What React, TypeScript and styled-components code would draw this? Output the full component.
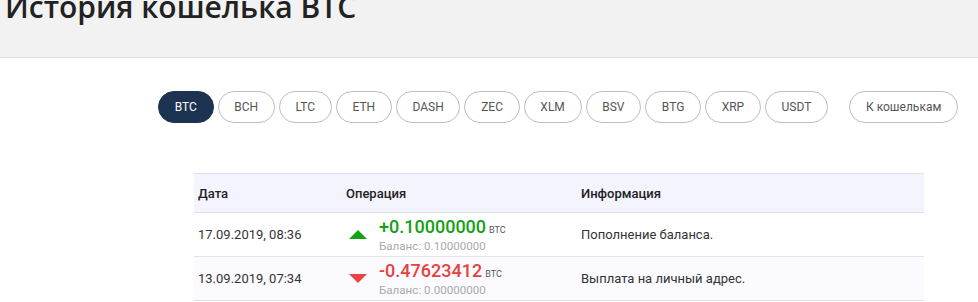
import styled, { createGlobalStyle } from 'styled-components';

const GlobalStyle = createGlobalStyle`
  body {
    margin: 0;
    background: #fff;
    font-family: Roboto, "Noto Sans", sans-serif;
    color: #333;
  }
`;

const coins = ['BTC', 'BCH', 'LTC', 'ETH', 'DASH', 'ZEC', 'XLM', 'BSV', 'BTG', 'XRP', 'USDT'];

const rows = [
  { date: '17.09.2019, 08:36', amount: '+0.10000000', balance: '0.10000000', info: 'Пополнение баланса.', up: true },
  { date: '13.09.2019, 07:34', amount: '-0.47623412', balance: '0.00000000', info: 'Выплата на личный адрес.', up: false },
];

const App = () => {
  return (
    <Page>
      <GlobalStyle />
      <Header>
        <Title>История кошелька BTC</Title>
      </Header>

      <Toolbar>
        <CoinList>
          {coins.map((c) => (
            <Pill key={c} active={c === 'BTC'}>{c}</Pill>
          ))}
        </CoinList>
        <Pill>К кошелькам</Pill>
      </Toolbar>

      <Table>
        <thead>
          <tr>
            <Th width={140}>Дата</Th>
            <Th width={227}>Операция</Th>
            <Th>Информация</Th>
          </tr>
        </thead>
        <tbody>
          {rows.map((r) => (
            <Tr key={r.date}>
              <Td>{r.date}</Td>
              <Td>
                <Operation>
                  <Arrow up={r.up} />
                  <div>
                    <Amount up={r.up}>
                      {r.amount}
                      <Unit>BTC</Unit>
                    </Amount>
                    <Balance>Баланс: {r.balance}</Balance>
                  </div>
                </Operation>
              </Td>
              <Td>{r.info}</Td>
            </Tr>
          ))}
        </tbody>
      </Table>
    </Page>
  );
};

export default App;

// region STYLES

const Page = styled.div`
  width: 978px;
  height: 302px;
  overflow: hidden;
`;

const Header = styled.div`
  height: 57px;
  background: #f2f2f2;
  border-bottom: 1px solid #dedede;
  padding-left: 5px;
  overflow: hidden;
`;

const Title = styled.h1`
  margin: -11px 0 0;
  font-family: "Open Sans", sans-serif;
  font-size: 30px;
  line-height: 36px;
  font-weight: 600;
  color: #222;
`;

const Toolbar = styled.div`
  display: flex;
  align-items: center;
  padding: 33px 20px 0 158px;
`;

const CoinList = styled.div`
  display: flex;
  gap: 4px;
  flex: 1;
`;

const Pill = styled.div<{ active?: boolean }>`
  height: 32px;
  box-sizing: border-box;
  padding: 0 15.7px;
  display: flex;
  align-items: center;
  border-radius: 16px;
  font-size: 12px;
  color: ${(p) => (p.active ? '#fff' : '#555')};
  background: ${(p) => (p.active ? '#1c3452' : '#fff')};
  border: 1px solid ${(p) => (p.active ? '#1c3452' : '#bdbdbd')};
`;

const Table = styled.table`
  margin: 50px 0 0 194px;
  width: 730px;
  border-collapse: collapse;
  font-size: 13px;
`;

const Th = styled.th<{ width?: number }>`
  width: ${(p) => (p.width ? `${p.width}px` : 'auto')};
  text-align: left;
  font-weight: 500;
  color: #222;
  height: 38px;
  padding: 0 4px;
  background: #f3f4fd;
  border-top: 1px solid #e2e2e6;
  border-bottom: 1px solid #e2e2e6;
`;

const Tr = styled.tr`
  border-bottom: 1px solid #e2e2e6;

  &:nth-child(even) {
    background: #fafaff;
  }
`;

const Td = styled.td`
  height: 43px;
  padding: 0 4px;
  color: #333;
`;

const Operation = styled.div`
  display: flex;
  align-items: center;
  gap: 12px;
  padding-left: 3px;
`;

const Arrow = styled.span<{ up: boolean }>`
  width: 0;
  height: 0;
  border-left: 9px solid transparent;
  border-right: 9px solid transparent;
  ${(p) => (p.up ? 'border-bottom: 9px solid #15a015;' : 'border-top: 9px solid #e84444;')}
`;

const Amount = styled.div<{ up: boolean }>`
  font-size: 18px;
  line-height: 20px;
  font-weight: 500;
  color: ${(p) => (p.up ? '#14a014' : '#e8403f')};
`;

const Unit = styled.span`
  font-size: 9px;
  font-weight: 400;
  color: #555;
  margin-left: 3px;
`;

const Balance = styled.div`
  font-size: 11.6px;
  line-height: 13px;
  color: #aaa;
`;

// endregion
